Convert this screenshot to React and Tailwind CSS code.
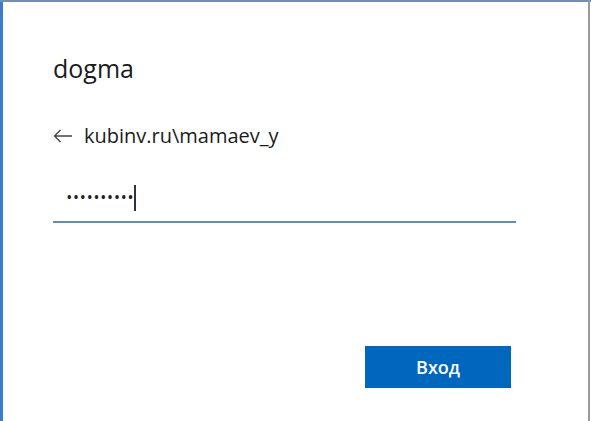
export default function App() {
  return (
    <main
      className="relative w-[591px] h-[421px] overflow-hidden bg-white text-[#1b1b1b]"
      style={{ fontFamily: '"Open Sans", "Noto Sans", Arial, sans-serif' }}
    >
      <div className="absolute left-0 top-0 h-full w-[3px] bg-[#3d7cc9]" />
      <div className="absolute left-0 top-0 h-[2px] w-full bg-[#6f8fb5]" />
      <div className="absolute right-[1px] top-0 h-full w-[2px] bg-[#9a9a9a]" />

      <div className="pl-[53px] pt-[51px]">
        <h1 className="text-[25px] leading-[35px]">dogma</h1>

        <div className="mt-[37px] flex items-center gap-[11px]">
          <svg width="20" height="14" viewBox="0 0 20 14" fill="none" stroke="#444" strokeWidth="1.4">
            <path d="M19 7H1.5M7.5 1L1.5 7l6 6" />
          </svg>
          <span className="text-[20px] leading-[26px]">kubinv.ru\mamaev_y</span>
        </div>

        <div className="mt-[28px] w-[463px] border-b-2 border-[#5d8fc4] pb-[2px] pl-[14px] flex items-center h-[46px]">
          <span className="text-[12px] tracking-[2.3px] font-bold leading-none text-[#222]">••••••••••</span>
          <span className="ml-[-1px] inline-block w-[1.5px] h-[26px] bg-[#333]" />
        </div>

        <div className="mt-[123px] flex justify-end w-[458px]">
          <button className="w-[146px] h-[42px] bg-[#0067be] text-white text-[18px] font-semibold">
            Вход
          </button>
        </div>
      </div>
    </main>
  );
}
